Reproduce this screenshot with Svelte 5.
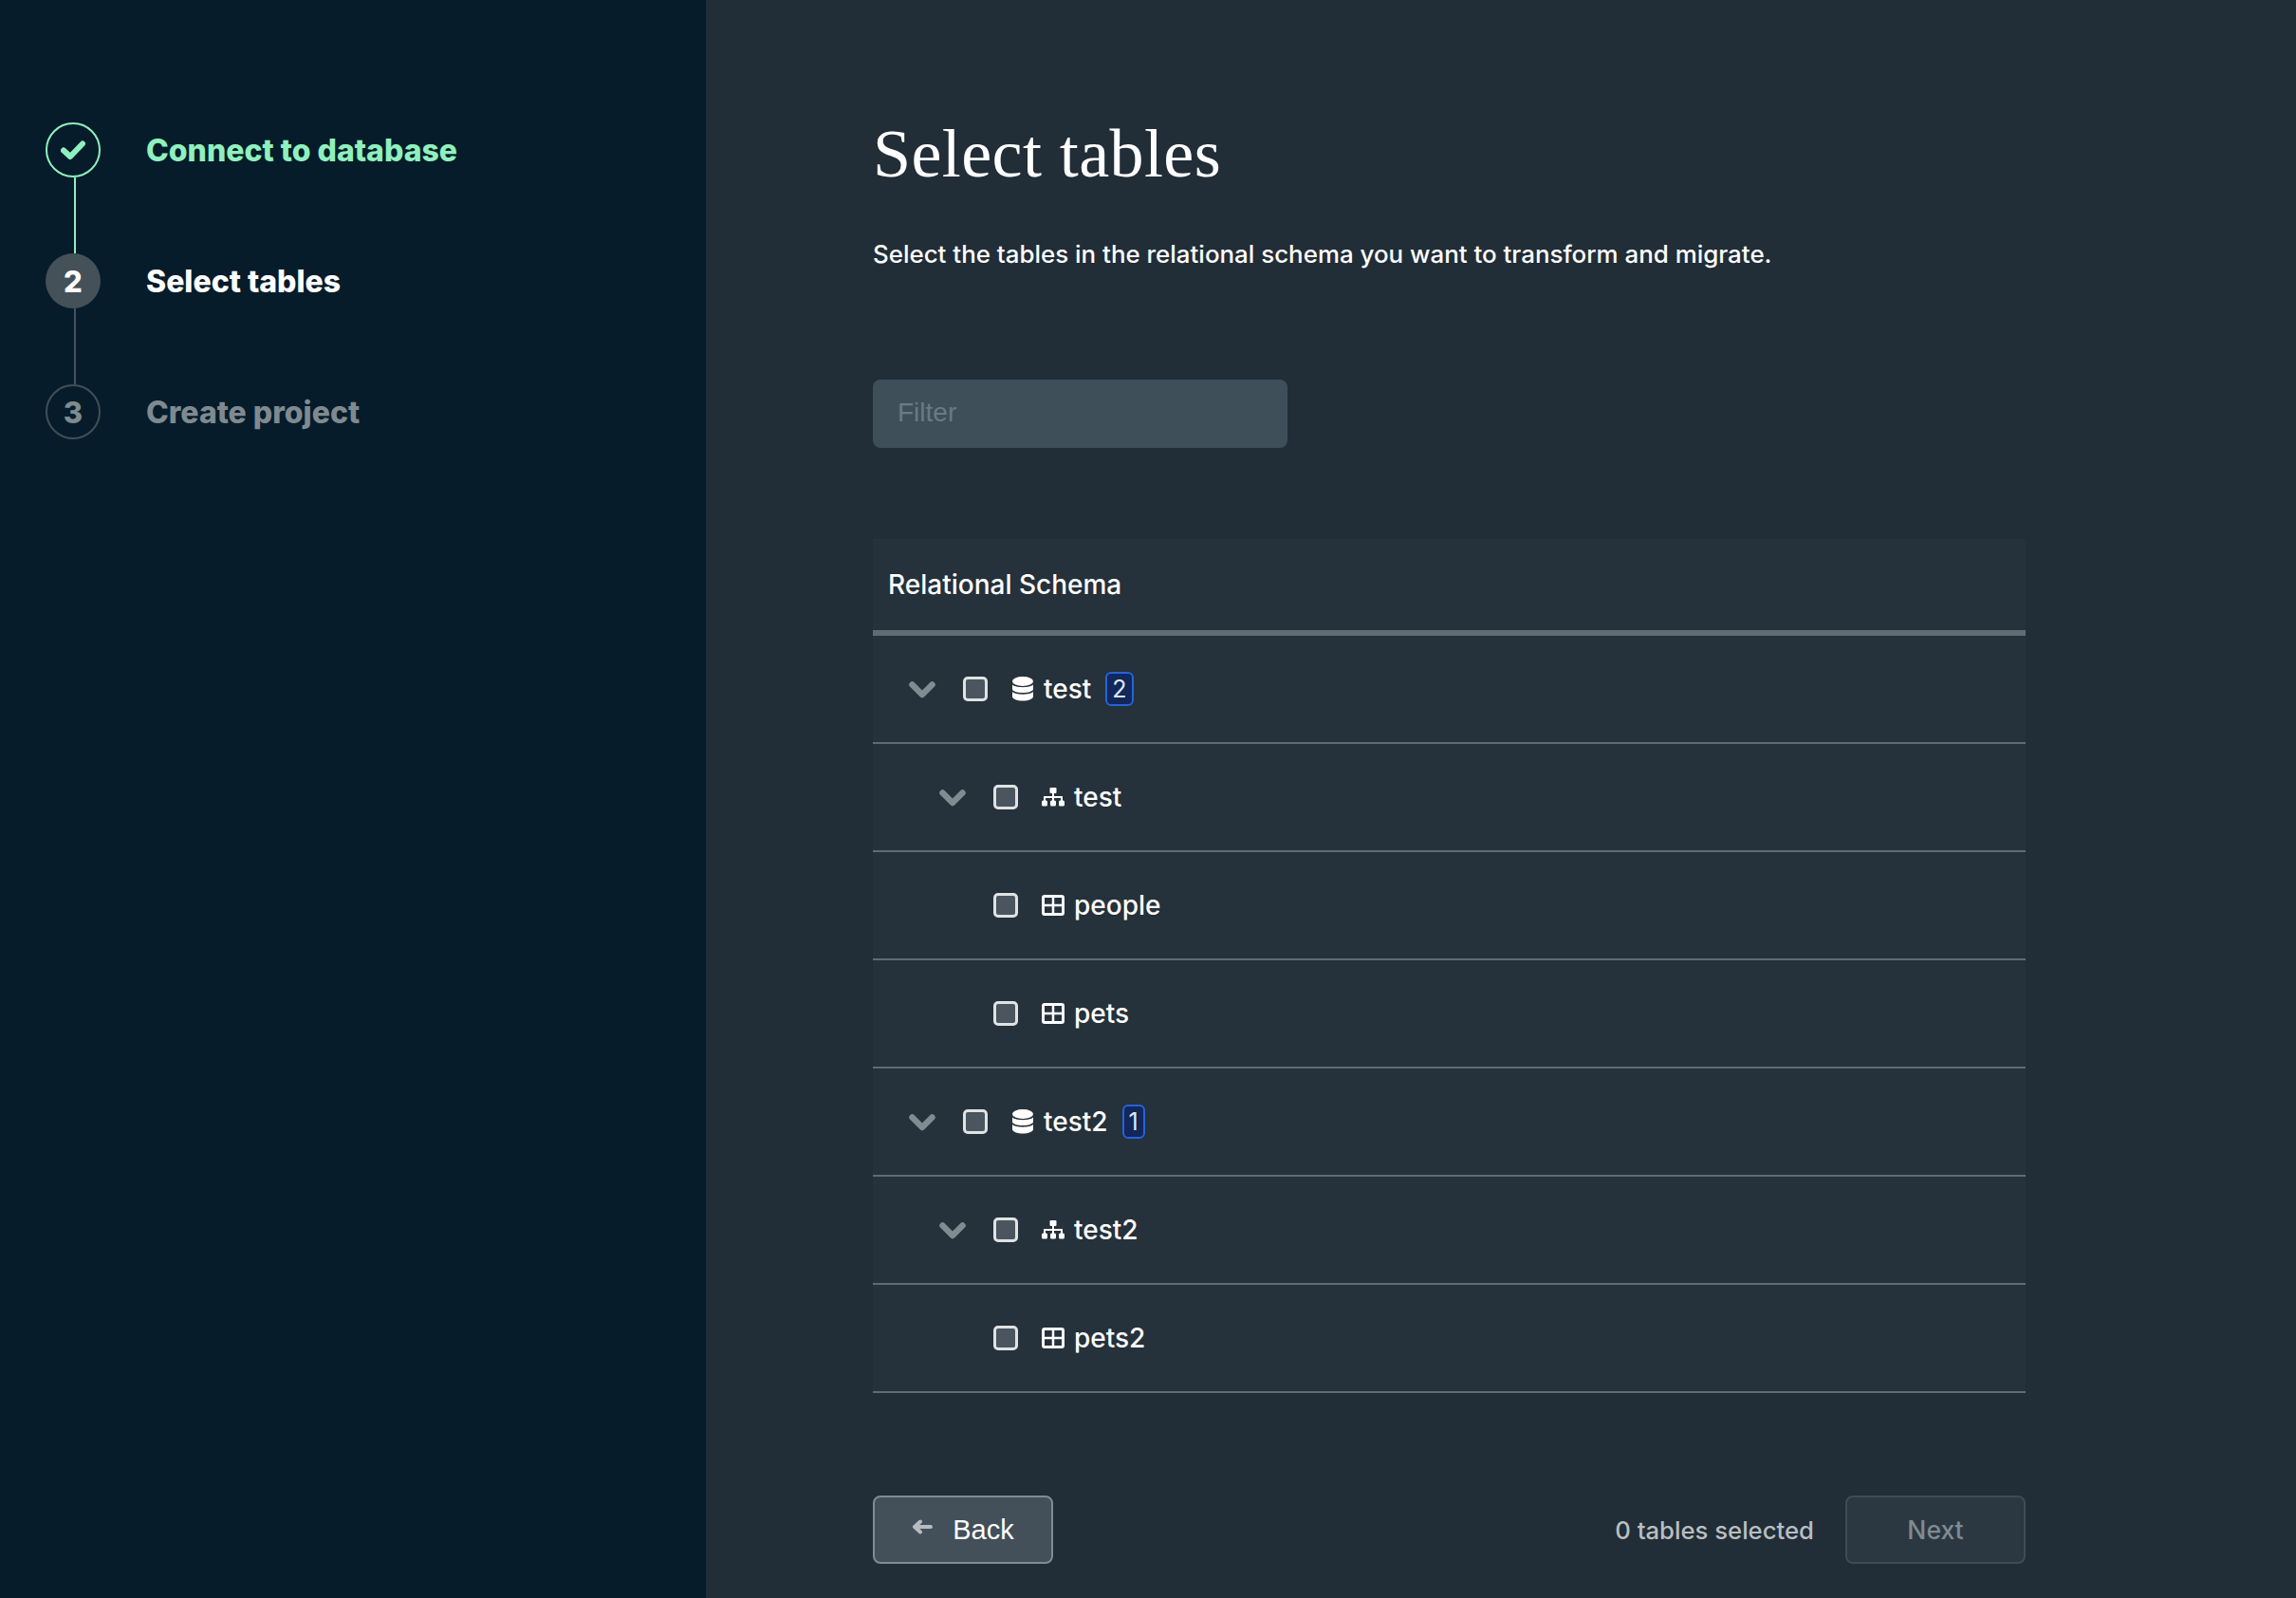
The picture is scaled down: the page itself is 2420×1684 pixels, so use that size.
<script>
  const steps = [
    { label: "Connect to database", state: "done" },
    { label: "Select tables", state: "active", num: 2 },
    { label: "Create project", state: "todo", num: 3 }
  ];

  const rows = [
    { level: 0, kind: "db", name: "test", count: 2, open: true },
    { level: 1, kind: "schema", name: "test", open: true },
    { level: 2, kind: "table", name: "people" },
    { level: 2, kind: "table", name: "pets" },
    { level: 0, kind: "db", name: "test2", count: 1, open: true },
    { level: 1, kind: "schema", name: "test2", open: true },
    { level: 2, kind: "table", name: "pets2" }
  ];
</script>

<div class="page">
  <aside class="sidebar">
    {#each steps as step, i}
      <div class="step {step.state}">
        <div class="track">
          <div class="circle">
            {#if step.state === "done"}
              <svg width="26" height="22" viewBox="0 0 26 22">
                <path d="M3 11.5 L10 18 L23 4.5" fill="none" stroke="currentColor" stroke-width="6" stroke-linejoin="round" stroke-linecap="round" />
              </svg>
            {:else}
              {step.num}
            {/if}
          </div>
          {#if i < steps.length - 1}
            <div class="line"></div>
          {/if}
        </div>
        <div class="label">{step.label}</div>
      </div>
    {/each}
  </aside>

  <main class="content">
    <h1>Select tables</h1>
    <p class="desc">Select the tables in the relational schema you want to transform and migrate.</p>

    <input class="filter" placeholder="Filter" />

    <section class="tree">
      <div class="tree-head">Relational Schema</div>
      {#each rows as row}
        <div class="row level{row.level}">
          {#if row.open}
            <svg class="chevron" width="28" height="18" viewBox="0 0 28 18">
              <path d="M3.5 3.5 L14 14 L24.5 3.5" fill="none" stroke="currentColor" stroke-width="6.5" stroke-linecap="round" stroke-linejoin="round" />
            </svg>
          {/if}
          <span class="check"></span>
          <span class="icon">
            {#if row.kind === "db"}
              <svg width="24" height="26" viewBox="0 0 24 26">
                <ellipse cx="12" cy="5" rx="11" ry="5" fill="currentColor" />
                <path d="M1 8.5 C4 12 20 12 23 8.5 V13 C23 15.5 18 17 12 17 C6 17 1 15.5 1 13 Z" fill="currentColor" />
                <path d="M1 16 C4 19.5 20 19.5 23 16 V21 C23 23.5 18 25.5 12 25.5 C6 25.5 1 23.5 1 21 Z" fill="currentColor" />
              </svg>
            {:else if row.kind === "schema"}
              <svg width="24" height="20" viewBox="0 0 24 20">
                <rect x="8.5" y="0" width="7" height="6" rx="1" fill="currentColor" />
                <path d="M12 6 V14 M3 14 V10 H21 V14" fill="none" stroke="currentColor" stroke-width="2" />
                <rect x="0" y="13.5" width="6" height="6" rx="1.5" fill="currentColor" />
                <rect x="9" y="13.5" width="6" height="6" rx="1.5" fill="currentColor" />
                <rect x="18" y="13.5" width="6" height="6" rx="1.5" fill="currentColor" />
              </svg>
            {:else}
              <svg width="24" height="22" viewBox="0 0 24 22">
                <rect x="1.5" y="1.5" width="21" height="19" rx="1.5" fill="none" stroke="currentColor" stroke-width="3" />
                <path d="M1 11 H23 M12 2 V20" fill="none" stroke="currentColor" stroke-width="2.5" />
              </svg>
            {/if}
          </span>
          <span class="name">{row.name}</span>
          {#if row.count}
            <span class="badge">{row.count}</span>
          {/if}
        </div>
      {/each}
    </section>

    <footer class="actions">
      <button class="btn back">
        <svg width="22" height="18" viewBox="0 0 22 18">
          <path d="M9 2.5 L3 8 L9 13.5 M3.5 8 H20" fill="none" stroke="currentColor" stroke-width="4" stroke-linecap="round" stroke-linejoin="round" />
        </svg>
        Back
      </button>
      <span class="selected">0 tables selected</span>
      <button class="btn next">Next</button>
    </footer>
  </main>
</div>

<style>
  :global(body) {
    margin: 0;
    background: #212d37;
  }

  .page {
    display: flex;
    width: 2420px;
    height: 1684px;
    overflow: hidden;
    font-family: "Inter", "Noto Sans", sans-serif;
    color: #fff;
  }

  .sidebar {
    width: 696px;
    flex: none;
    background: #061c2a;
    padding: 129px 0 0 48px;
  }

  .step {
    display: flex;
    gap: 48px;
  }

  .track {
    display: flex;
    flex-direction: column;
    align-items: center;
    width: 58px;
  }

  .circle {
    width: 58px;
    height: 58px;
    box-sizing: border-box;
    border-radius: 50%;
    display: flex;
    align-items: center;
    justify-content: center;
    font-size: 31px;
    font-weight: 800;
    border: 2px solid transparent;
  }

  .line {
    width: 2px;
    height: 80px;
    margin-left: 4px;
    background: #46525c;
  }

  .label {
    font-size: 32px;
    font-weight: 800;
    line-height: 60px;
  }

  .done .circle {
    border-color: #8ff0bd;
    color: #8ff0bd;
  }
  .done .line {
    background: #8ff0bd;
  }
  .done .label {
    color: #8ff0bd;
  }
  .active .circle {
    background: #445159;
    color: #fff;
  }
  .todo .circle {
    border-color: #414e58;
    color: #7f8a90;
  }
  .todo .label {
    color: #7f8a90;
  }

  .content {
    flex: 1;
    padding: 0 0 0 176px;
    width: 1215px;
  }

  h1 {
    margin: 122px 0 0;
    height: 80px;
    font-family: "Liberation Serif", serif;
    font-size: 72px;
    font-weight: 400;
    line-height: 80px;
    letter-spacing: 0.4px;
  }

  .desc {
    margin: 50px 0 0;
    font-size: 25.9px;
    line-height: 32px;
    font-weight: 500;
  }

  .filter {
    display: block;
    margin-top: 116px;
    width: 437px;
    height: 72px;
    box-sizing: border-box;
    border: none;
    border-radius: 8px;
    background: #3e4f5a;
    padding: 0 26px 2px;
    font-family: "Liberation Sans", sans-serif;
    font-size: 28px;
    color: #fff;
  }

  .filter::placeholder {
    color: #6c7a82;
    opacity: 1;
  }

  .tree {
    margin-top: 96px;
    width: 1215px;
    background: #25313b;
  }

  .tree-head {
    height: 102px;
    box-sizing: border-box;
    padding-left: 16px;
    display: flex;
    align-items: center;
    border-bottom: 6px solid #5f6c73;
    font-size: 28px;
    font-weight: 500;
    background: #25313b;
  }

  .row {
    height: 114px;
    box-sizing: border-box;
    border-bottom: 2px solid #5f6c73;
    display: flex;
    align-items: center;
    font-size: 28px;
    font-weight: 500;
    position: relative;
    color: #fff;
  }

  .level0 {
    padding-left: 38px;
  }
  .level1 {
    padding-left: 70px;
  }
  .level2 {
    padding-left: 127px;
  }

  .chevron {
    color: #7f8d92;
    margin-right: 29px;
    margin-top: 1px;
    flex: none;
  }

  .check {
    width: 26px;
    height: 26px;
    box-sizing: border-box;
    border: 3px solid #dfe3e4;
    border-radius: 5px;
    background: #4a5560;
    flex: none;
  }

  .icon {
    display: flex;
    align-items: center;
    margin-left: 25px;
    margin-right: 10px;
    color: #fff;
    width: 24px;
    flex: none;
  }

  .badge {
    min-width: 23px;
    height: 36px;
    box-sizing: border-box;
    margin-left: 15px;
    padding: 0 5px;
    display: flex;
    align-items: center;
    justify-content: center;
    border: 2px solid #2563d9;
    border-radius: 6px;
    background: #12275a;
    color: #dfe7f5;
    font-size: 25px;
    font-weight: 400;
  }

  .actions {
    margin-top: 108px;
    width: 1215px;
    display: flex;
    align-items: center;
  }

  .btn {
    width: 190px;
    height: 72px;
    box-sizing: border-box;
    border-radius: 8px;
    font-size: 28px;
    display: flex;
    align-items: center;
    justify-content: center;
    padding: 0;
  }

  .back {
    background: #434f59;
    border: 2px solid #7e8d93;
    color: #fff;
    font-family: "Liberation Sans", sans-serif;
    font-size: 29px;
    gap: 21px;
  }

  .back svg {
    color: #b5bcbf;
    margin-top: -4px;
  }

  .next {
    background: #2b3842;
    border: 2px solid #3f4c56;
    color: #7f8b91;
    font-family: "Inter", sans-serif;
    font-weight: 500;
    font-size: 26.5px;
  }

  .selected {
    margin-left: auto;
    margin-right: 33px;
    color: #b8bfc1;
    font-size: 25.7px;
    font-weight: 500;
  }
</style>
